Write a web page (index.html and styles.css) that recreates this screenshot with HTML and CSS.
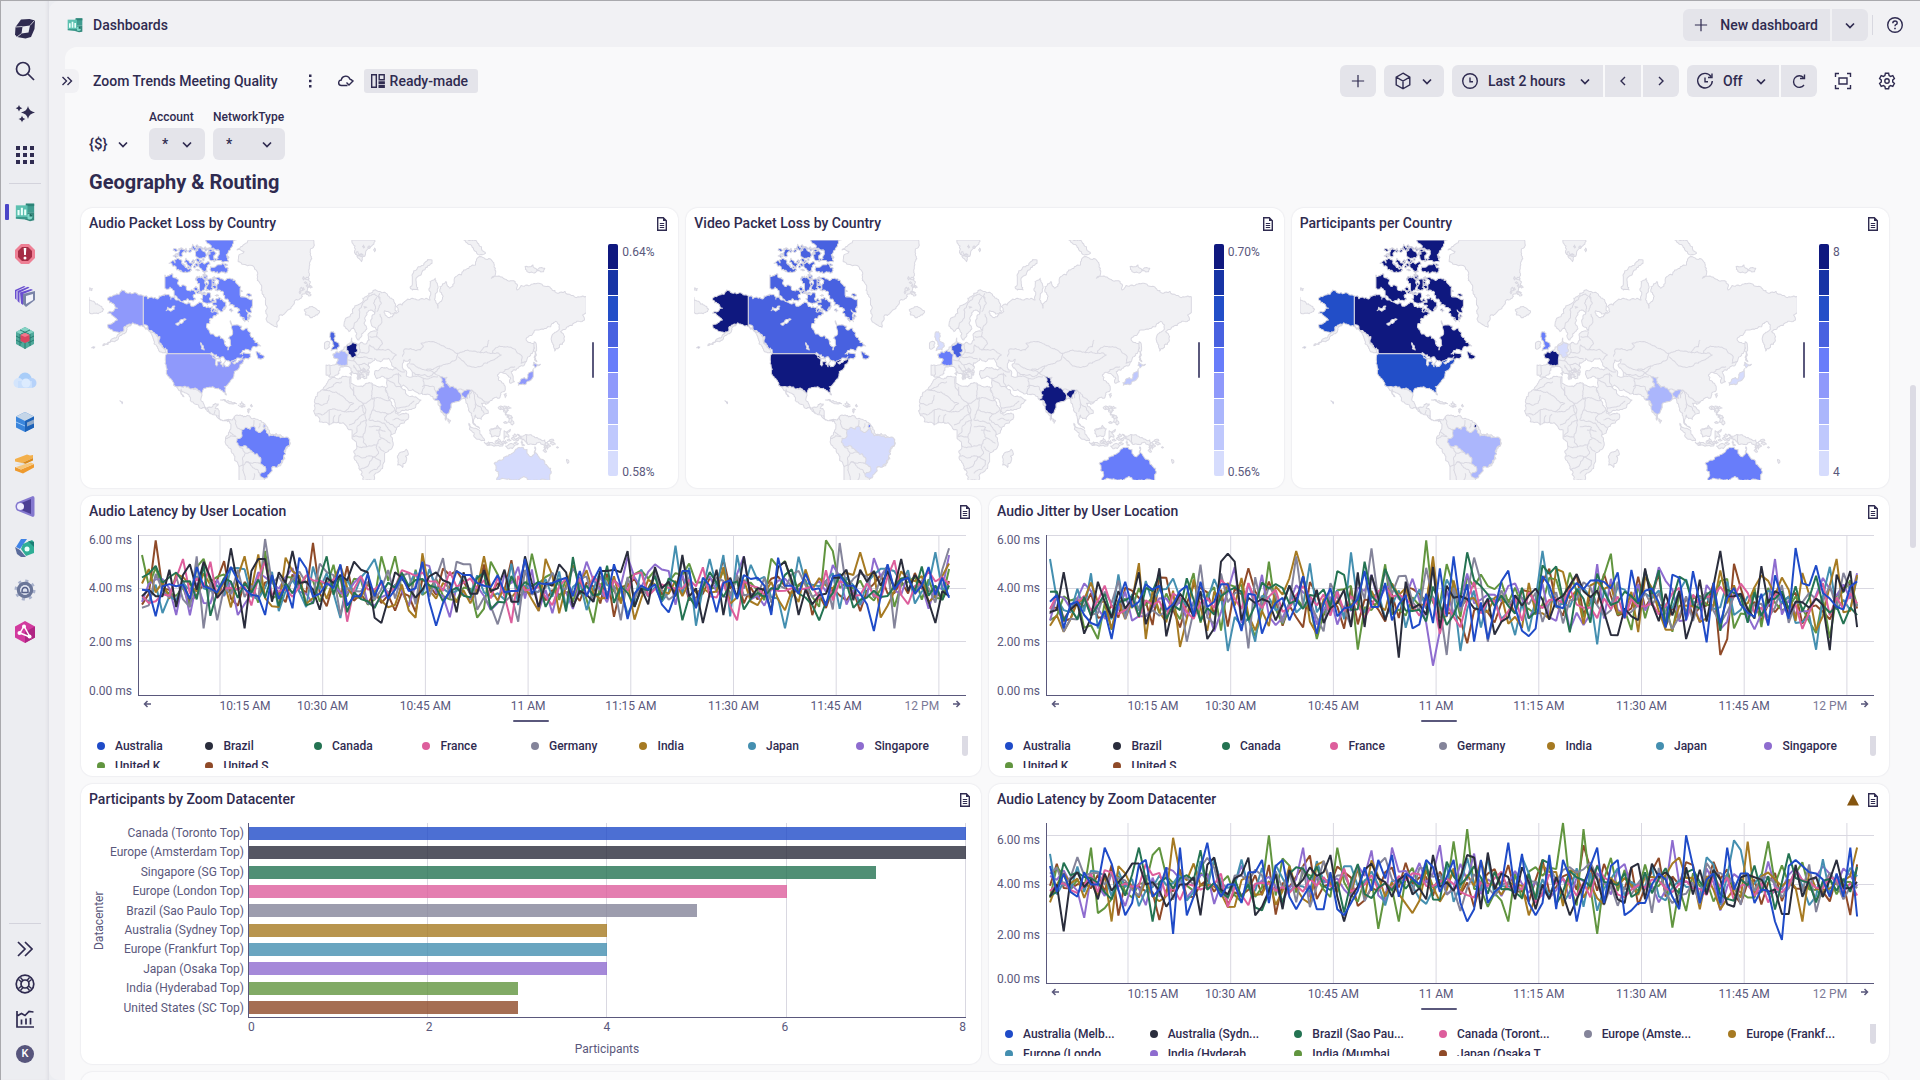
FILE: index.html
```html
<!DOCTYPE html>
<html lang="en">
<head>
<meta charset="utf-8">
<title>Zoom Trends Meeting Quality - Dashboards</title>
<meta name="viewport" content="width=device-width, initial-scale=1">
<link rel="stylesheet" href="styles.css">
</head>
<body>
<svg class="defs" aria-hidden="true">
  <symbol id="chev" viewBox="0 0 16 16"><path d="M4 6.500l4 4 4-4" class="ln2"/></symbol>
  <symbol id="plus" viewBox="0 0 16 16"><path d="M8 1v14M1 8h14" class="ln"/></symbol>
  <symbol id="doc" viewBox="0 0 16 16"><path d="M3.700 1.700h5.600l3 3v9.600H3.700z" class="ln"/><path d="M9 1.500v3.500h3.500z" fill="currentColor"/><path d="M5.800 7.500h4.400M5.800 9.500h4.400M5.800 11.500h4.400" class="ln thin"/></symbol>
  <symbol id="dash" viewBox="0 0 24 24">
    <path d="M13 2h10v11H13z" fill="#3f9c8f"/><path d="M13 2h10v3H13z" fill="#2d8478"/>
    <path d="M12 13h11v9l-5 1-6-2z" fill="#35897d"/><circle cx="17.500" cy="17.500" r="3.500" fill="#7fd8c8"/><path d="M17.500 17.500V14a3.500 3.500 0 0 1 3.500 3.500z" fill="#1f6a60"/>
    <path d="M1 4h14v14H1z" fill="#5cc0b0"/><path d="M1 18h14v2l-3 1-11-1z" fill="#3b988b"/>
    <path d="M3 9.500h2.500V16H3zM7 7h2.500v9H7zM11 9h2.500v7H11z" fill="#e9fffa"/>
  </symbol>
</svg>

<nav class="rail" aria-label="Main">
  <a class="rail-item" href="#" aria-label="Home"><svg width="20" height="20" viewBox="0 0 20 20"><path d="M6 .5L14.500 0 20 1.500 19.500 10l-3.500 8-5.500 1.500L2 18 0 15.500 .5 8z" fill="#2f2b50"/><path d="M7.500 7.500l7.500-1-1.500 7-7 1z" fill="#ecedf1"/><path d="M.5 8l7-.5M15 6.500l4.500-5M6.500 14.500L2 18" stroke="#ecedf1" stroke-width=".8"/></svg></a>
  <a class="rail-item" href="#" aria-label="Search"><svg width="20" height="20" viewBox="0 0 20 20"><circle cx="8" cy="8" r="6.500" class="ln2"/><path d="M13 13l6 6" class="ln2"/></svg></a>
  <a class="rail-item" href="#" aria-label="Assistant"><svg width="20" height="20" viewBox="0 0 20 20" fill="currentColor"><path d="M13 3q.8 5.200 7 6.500-6.200 1.300-7 6.500-.8-5.200-7-6.500Q12.200 8.200 13 3zM4 2q.5 2.800 3.300 3.300Q4.500 5.800 4 8.600 3.500 5.800.7 5.300 3.500 4.800 4 2zM7 12.500q.5 3 3.500 3.500-3 .5-3.500 3.500-.5-3-3.500-3.500 3-.5 3.500-3.500z"/></svg></a>
  <a class="rail-item" href="#" aria-label="Apps"><svg width="18" height="18" viewBox="0 0 18 18" fill="currentColor"><path d="M0 0h4v4H0zM7 0h4v4H7zM14 0h4v4h-4zM0 7h4v4H0zM7 7h4v4H7zM14 7h4v4h-4zM0 14h4v4H0zM7 14h4v4H7zM14 14h4v4h-4z"/></svg></a>
  <hr class="rail-rule">
  <a class="rail-item active" href="#" aria-label="Dashboards"><svg width="20" height="20"><use href="#dash"/></svg></a>
  <a class="rail-item" href="#" aria-label="Problems"><svg width="20" height="20" viewBox="0 0 20 20"><path d="M6 0h8l6 6v8l-6 6H6l-6-6V6z" fill="#ee8095"/><path d="M7 3h6l4 4v6l-4 4H7l-4-4V7z" fill="#a52c45"/><path d="M8.700 4h2.600l-.4 7H9.100z" fill="#fff"/><circle cx="10" cy="14" r="1.500" fill="#fff"/></svg></a>
  <a class="rail-item" href="#" aria-label="Services"><svg width="20" height="21" viewBox="0 0 20 21"><path d="M8 8l12-3v9l-9 7-3-3z" fill="#7a84a8"/><path d="M11 10l7-2v6l-7 4z" fill="#f2f3fb"/><path d="M5 6.500L16 3l2 1L8 8v11l-2-1.500zM2.500 5L13 .8l1.500 1L4.500 6.500v10.500L2.500 15zM0 4l9-4 1.500.7L1.500 5v9L0 12.500z" fill="#6a4fd0"/></svg></a>
  <a class="rail-item" href="#" aria-label="Kubernetes"><svg width="20" height="22" viewBox="0 0 20 22"><path d="M10 0l9 5v12l-9 5-9-5V5z" fill="#4fa99b"/><path d="M10 0l9 5-9 4-9-4z" fill="#86d3c5"/><path d="M1 9l6 3M1 13l6 3M19 9l-6 3M19 13l-6 3M5 3l9 4M15 3L6 7M5 7v12M15 7v12M10 16v6" stroke="#24776c" stroke-width=".9"/><path d="M10 6l4.500 2v6L10 16l-4.500-2V8z" fill="#d9455f"/><path d="M10 6l4.500 2-4.500 2-4.500-2z" fill="#f0788c"/></svg></a>
  <a class="rail-item" href="#" aria-label="Clouds"><svg width="24" height="17" viewBox="0 0 24 17"><circle cx="12" cy="7" r="6.500" fill="#a9cdf8"/><circle cx="5.500" cy="11" r="5" fill="#d4e5fc"/><circle cx="18.500" cy="11" r="5" fill="#b6d2fa"/><path d="M5 9h14v7H5z" fill="#c9dffc"/><circle cx="13" cy="11" r="4.500" fill="#dcebfe"/></svg></a>
  <a class="rail-item" href="#" aria-label="Infrastructure"><svg width="20" height="20" viewBox="0 0 20 20"><path d="M10 0l9 4.500v11L10 20l-9-4.500v-11z" fill="#3b86dc"/><path d="M10 0l9 4.500L10 9 1 4.500z" fill="#c5d6e8"/><path d="M10 9l9-4.500v11L10 20z" fill="#1d62b8"/><path d="M12 10.500l7-3v4l-7 3z" fill="#8fa9c9"/><path d="M1 10l9 4" stroke="#9cc9fa"/></svg></a>
  <a class="rail-item" href="#" aria-label="Workflows"><svg width="20" height="20" viewBox="0 0 20 20"><path d="M0 5L12 .500l3 1L18 1v3L7 9 0 7.500z" fill="#f3b04c"/><path d="M7 9L18 4v2.500L7 11.500z" fill="#d98a1e"/><path d="M0 10l6 2 5-2-3-1z" fill="#e4e2de"/><path d="M0 13l6 2.500L19 10v3.500L8 19.500 0 16.500z" fill="#ee9a2e"/><path d="M6 15.500L19 10l-3-1.500L1 13z" fill="#f7c679"/></svg></a>
  <a class="rail-item" href="#" aria-label="Synthetic"><svg width="20" height="21" viewBox="0 0 20 21"><path d="M18 0q1.500.3 1.500 2v17q0 1.700-1.500 2L2 14.500q-3-4 0-8z" fill="#8478cf"/><path d="M16 3v15L5 13.500q-1.500-3 0-6z" fill="#4c3f95"/><circle cx="5.500" cy="10.500" r="3.500" fill="#f1efff"/></svg></a>
  <a class="rail-item" href="#" aria-label="Security"><svg width="20" height="20" viewBox="0 0 20 20"><path d="M6 1h6L5 11 1 9z" fill="#3f83e6"/><path d="M0 9l5 3 6 7H6L2 16z" fill="#5a6b9b"/><path d="M8 6l9-4 2 2v11l-8 3-5-7z" fill="#2fae96"/><path d="M13 3l6 1v5z" fill="#1b7d75"/><circle cx="12" cy="11" r="2.500" fill="#e9fffb"/></svg></a>
  <a class="rail-item" href="#" aria-label="Settings"><svg width="22" height="22" viewBox="0 0 22 22"><circle cx="11" cy="11" r="9" fill="none" stroke="#a9b2cc" stroke-width="3" stroke-dasharray="3 4.070"/><circle cx="11" cy="11" r="6.500" fill="none" stroke="#6a7699" stroke-width="3.500"/><circle cx="11" cy="11" r="4.800" fill="#dfe4f1"/><path d="M8 13.500v-1q0-4 3-4t3 4v1z" fill="none" stroke="#56618a" stroke-width="1.500"/></svg></a>
  <a class="rail-item" href="#" aria-label="Topology"><svg width="20" height="22" viewBox="0 0 20 22"><path d="M10 0l10 5.500v11L10 22 0 16.500v-11z" fill="#d23a9e"/><path d="M10 11l10-5.500v11L10 22z" fill="#b02584"/><path d="M9 5L5 12l10 4z" fill="none" stroke="#fff" stroke-width="1.500"/><circle cx="9" cy="5.500" r="2" fill="#fff"/><circle cx="4.500" cy="12" r="2" fill="#fff"/><circle cx="14.500" cy="15.500" r="2" fill="#fff"/></svg></a>
  <div class="rail-foot">
    <hr class="rail-rule">
    <button class="foot-item" aria-label="Expand"><svg width="16" height="16" viewBox="0 0 16 16"><path d="M1 1l7 7-7 7M8 1l7 7-7 7" class="ln2"/></svg></button>
    <button class="foot-item" aria-label="Support"><svg width="20" height="20" viewBox="0 0 20 20"><circle cx="10" cy="10" r="8.800" class="ln2"/><circle cx="10" cy="10" r="4" class="ln2"/><path d="M3.500 5.500l3 2.500M5.500 3.500L8 6.500M16.500 5.500l-3 2.500M14.500 3.500L12 6.500M3.500 14.500l3-2.500M5.500 16.500L8 13.500M16.500 14.500l-3-2.500M14.500 16.500L12 13.500" class="ln"/></svg></button>
    <button class="foot-item" aria-label="Usage"><svg width="18" height="18" viewBox="0 0 18 18"><path d="M1 1v16h17M5.500 14.500v-5M10 14.500V8.500M14.500 14.500V8M1 6l4.500-2.500L9 5.500l4-4 4.500.5" class="ln2"/></svg></button>
    <button class="foot-item" aria-label="Account K"><span class="avatar">K</span></button>
  </div>
</nav>

<div class="shell">
  <header class="topbar">
    <svg width="16" height="16"><use href="#dash"/></svg>
    <a class="app-name" href="#">Dashboards</a>
    <div class="split push">
      <button class="btn new"><svg width="14" height="14"><use href="#plus"/></svg>New dashboard</button>
      <button class="btn sq" aria-label="More"><svg width="16" height="16"><use href="#chev"/></svg></button>
    </div>
    <span class="sep"></span>
    <button class="ghost" aria-label="Help"><svg width="18" height="18" viewBox="0 0 18 18"><circle cx="9" cy="9" r="7.300" class="ln"/><path d="M6.800 7.200q0-2.200 2.200-2.200t2.200 2q0 1.200-1.300 1.700-.9.400-.9 1.500" class="ln"/><path d="M8.200 11.700h1.600v1.500H8.200z" fill="currentColor"/></svg></button>
  </header>

  <main class="page">
    <div class="toolbar">
      <button class="tab" aria-label="Open panel"><svg width="12" height="12" viewBox="0 0 12 12"><path d="M1.500 2l4 4-4 4M6.500 2l4 4-4 4" class="ln"/></svg></button>
      <h1 class="doc-title">Zoom Trends Meeting Quality</h1>
      <button class="mini kebab" aria-label="Menu"><svg width="16" height="16" viewBox="0 0 16 16" fill="currentColor"><path d="M7 1.500h2.500V4H7zM7 6.800h2.500v2.500H7zM7 12h2.500v2.500H7z"/></svg></button>
      <svg class="cloud" width="16" height="16" viewBox="0 0 16 16"><path d="M9.500 12.500h-6A2.700 2.700 0 0 1 3.300 7 4.500 4.500 0 0 1 12 6.200q2 .3 2.500 1.800M8.500 9.500l2.500 2.500 4.500-4.500" class="ln"/></svg>
      <span class="chip"><svg width="16" height="16" viewBox="0 0 16 16"><path d="M1.700 1.700h4.600v12.600H1.700zM9.200 1.700h5v5h-5zM9.200 9h5v1.500h-5zM9.200 12.800h5v1.500h-5z" class="ln"/></svg>Ready-made</span>
      <button class="btn sq push" aria-label="Add"><svg width="14" height="14"><use href="#plus"/></svg></button>
      <button class="btn cube" aria-label="Segments"><svg width="18" height="18" viewBox="0 0 18 18"><path d="M9 1.200l6.800 3.900v7.800L9 16.800l-6.800-3.900V5.100zM2.200 5.200L9 9l6.800-3.800M9 9v7.700" class="ln"/></svg><svg width="16" height="16"><use href="#chev"/></svg></button>
      <div class="split">
        <button class="btn time"><svg width="18" height="18" viewBox="0 0 18 18"><circle cx="9" cy="9" r="7.300" class="ln"/><path d="M9 5.500v4.200h3" class="ln"/></svg><span class="grow">Last 2 hours</span><svg width="16" height="16"><use href="#chev"/></svg></button>
        <button class="btn sq" aria-label="Back"><svg width="16" height="16" viewBox="0 0 16 16"><path d="M10 4L6 8l4 4" class="ln"/></svg></button>
        <button class="btn sq" aria-label="Forward"><svg width="16" height="16" viewBox="0 0 16 16"><path d="M6 4l4 4-4 4" class="ln"/></svg></button>
      </div>
      <div class="split">
        <button class="btn off"><svg width="18" height="18" viewBox="0 0 18 18"><path d="M15 4.500A7.300 7.300 0 1 0 16.300 9M16 1.500v4h-4" class="ln"/><path d="M9 5.500v4.200h3" class="ln"/></svg><span class="grow">Off</span><svg width="16" height="16"><use href="#chev"/></svg></button>
        <button class="btn sq" aria-label="Refresh"><svg width="16" height="16" viewBox="0 0 16 16"><path d="M12.500 4.500A5.800 5.800 0 1 0 13 12M13.500 1.500V5.500H9" class="ln"/></svg></button>
      </div>
      <button class="ghost" aria-label="Full screen"><svg width="18" height="18" viewBox="0 0 18 18"><path d="M1.500 5V1.500H5M13 1.500h3.500V5M16.500 13v3.500H13M5 16.500H1.500V13M5 6h8v6H5z" class="ln"/></svg></button>
      <button class="ghost" aria-label="Settings"><svg width="18" height="18" viewBox="0 0 18 18"><path d="M7.400 1.300h3.200l.5 2.200 1.500.9 2.200-.7 1.600 2.800-1.700 1.500v2l1.700 1.500-1.600 2.800-2.200-.7-1.500.9-.5 2.200H7.400l-.5-2.200-1.500-.9-2.200.7-1.600-2.800L3.300 10V8L1.600 6.500l1.600-2.800 2.200.7 1.500-.9z" class="ln"/><circle cx="9" cy="9" r="2.200" class="ln"/></svg></button>
    </div>

    <div class="filters">
      <button class="vars" aria-label="Variables"><span>{$}</span><svg width="16" height="16"><use href="#chev"/></svg></button>
      <div class="field"><label for="account">Account</label><span class="pick"><select id="account"><option>*</option></select><svg width="16" height="16"><use href="#chev"/></svg></span></div>
      <div class="field wide"><label for="network">NetworkType</label><span class="pick"><select id="network"><option>*</option></select><svg width="16" height="16"><use href="#chev"/></svg></span></div>
    </div>

    <h2 class="section">Geography &amp; Routing</h2>

    <div class="tiles">
      <section class="card third">
        <div class="card-head"><h3>Audio Packet Loss by Country</h3><svg width="16" height="16"><use href="#doc"/></svg></div>
        <div class="geo"><svg class="map loss-audio" viewBox="0 0 497 240" preserveAspectRatio="xMidYMid slice" role="img" aria-label="World map"></svg><i class="grip-v"></i><div class="ramp"></div><div class="ramp-text"><span>0.64%</span><span>0.58%</span></div></div>
      </section>
      <section class="card third">
        <div class="card-head"><h3>Video Packet Loss by Country</h3><svg width="16" height="16"><use href="#doc"/></svg></div>
        <div class="geo"><svg class="map loss-video" viewBox="0 0 497 240" preserveAspectRatio="xMidYMid slice" role="img" aria-label="World map"></svg><i class="grip-v"></i><div class="ramp"></div><div class="ramp-text"><span>0.70%</span><span>0.56%</span></div></div>
      </section>
      <section class="card third">
        <div class="card-head"><h3>Participants per Country</h3><svg width="16" height="16"><use href="#doc"/></svg></div>
        <div class="geo"><svg class="map people" viewBox="0 0 497 240" preserveAspectRatio="xMidYMid slice" role="img" aria-label="World map"></svg><i class="grip-v"></i><div class="ramp"></div><div class="ramp-text"><span>8</span><span>4</span></div></div>
      </section>

      <section class="card half">
        <div class="card-head"><h3>Audio Latency by User Location</h3><svg width="16" height="16"><use href="#doc"/></svg></div>
        <div class="chart" data-chart="latency"></div>
      </section>
      <section class="card half">
        <div class="card-head"><h3>Audio Jitter by User Location</h3><svg width="16" height="16"><use href="#doc"/></svg></div>
        <div class="chart" data-chart="jitter"></div>
      </section>

      <section class="card half">
        <div class="card-head"><h3>Participants by Zoom Datacenter</h3><svg width="16" height="16"><use href="#doc"/></svg></div>
        <div class="bars">
          <div class="bars-title">Datacenter</div>
          <ul class="cats"><li>Canada (Toronto Top)</li><li>Europe (Amsterdam Top)</li><li>Singapore (SG Top)</li><li>Europe (London Top)</li><li>Brazil (Sao Paulo Top)</li><li>Australia (Sydney Top)</li><li>Europe (Frankfurt Top)</li><li>Japan (Osaka Top)</li><li>India (Hyderabad Top)</li><li>United States (SC Top)</li></ul>
          <div class="bars-plot"></div>
          <div class="bars-ticks"><span>0</span><span>2</span><span>4</span><span>6</span><span>8</span></div>
          <div class="bars-unit">Participants</div>
        </div>
      </section>
      <section class="card half">
        <div class="card-head"><h3>Audio Latency by Zoom Datacenter</h3><svg class="warn" width="16" height="16" viewBox="0 0 16 16"><path d="M8 2l6 11.500H2z" fill="#85550f"/></svg><svg width="16" height="16"><use href="#doc"/></svg></div>
        <div class="chart" data-chart="center"></div>
      </section>
      <div class="card next"></div>
    </div>
    <i class="page-thumb"></i>
  </main>
</div>
<script src="app.js"></script>
</body>
</html>
```
FILE: styles.css
```css
* { box-sizing: border-box; }
:root {
  --ink: #2f2b50;
  --axis: #5a587c;
  --btn: #e4e4ea;
  --gutter: #f1f1f4;
  --s1: #1f4bc8; --s2: #2a2d3c; --s3: #247352; --s4: #dd5e9c; --s5: #84849a;
  --s6: #a67a22; --s7: #448fb0; --s8: #8e6ccf; --s9: #61953f; --s10: #8f4a28;
}
body {
  margin: 0;
  display: flex;
  height: 100vh;
  overflow: hidden;
  font: 500 14px/20px Roboto, "Noto Sans", sans-serif;
  color: var(--ink);
  background: #ecedf1;
  border-top: 1px solid #a9a9ad;
  border-left: 1px solid #a9a9ad;
}
h1, h2, h3 { margin: 0; font-size: inherit; font-weight: 500; }
ul { margin: 0; padding: 0; list-style: none; }
button, select { font: inherit; color: inherit; border: 0; margin: 0; padding: 0; background: none; }
a { color: inherit; text-decoration: none; }
svg { display: block; flex: none; }
.defs { position: absolute; width: 0; height: 0; }
.ln { fill: none; stroke: currentColor; stroke-width: 1.4; }
.ln2 { fill: none; stroke: currentColor; stroke-width: 1.7; }
.thin { stroke-width: 1; }
.push { margin-left: auto; }

/* left rail */
.rail { width: 48px; flex: none; display: flex; flex-direction: column; padding-top: 7px; box-shadow: inset -3px 0 4px -3px #cfd0d8; }
.rail-item { height: 42px; flex: none; display: grid; place-items: center; position: relative; }
.rail-rule { flex: none; width: 32px; height: 1px; margin: 7px auto; border: 0; background: #d3d3dc; }
.rail-item.active::before { content: ""; position: absolute; left: 4px; top: 13px; width: 4px; height: 16px; border-radius: 1px; background: #4b46c8; }
.rail-foot { margin-top: auto; padding-bottom: 9px; }
.foot-item { display: grid; place-items: center; width: 100%; height: 35px; }
.avatar { width: 18px; height: 18px; border-radius: 50%; background: #57557c; color: #fff; font-size: 11px; line-height: 18px; }

/* shell */
.shell { flex: 1; min-width: 0; display: flex; flex-direction: column; background: var(--gutter); border-radius: 10px 0 0 10px; }
.topbar { height: 46px; flex: none; display: flex; align-items: center; padding: 2px 7px 0 18px; }
.app-name { margin-left: 10px; }
.split { display: flex; gap: 2px; }
.btn { height: 32px; display: flex; align-items: center; justify-content: center; background: var(--btn); border-radius: 6px; }
.split .btn { border-radius: 0; }
.split .btn:first-child { border-radius: 6px 0 0 6px; }
.split .btn:last-child { border-radius: 0 6px 6px 0; }
.sq { width: 36px; }
.new { padding: 0 12px 0 11px; gap: 12px; }
.sep { width: 1px; height: 20px; margin: 0 4px; background: #d8d8e0; }
.ghost { width: 36px; height: 32px; display: grid; place-items: center; }

.page { flex: 1; min-height: 0; position: relative; background: #f9f9fa; margin-left: 16px; border-radius: 12px 0 0 0; padding: 18px 15px 0 0; }
.toolbar { display: flex; align-items: center; gap: 8px; }
.tab { width: 14px; height: 24px; display: flex; align-items: center; background: var(--gutter); border-radius: 0 6px 6px 0; }
.tab svg { margin-left: -4px; }
.doc-title { margin-left: 6px; }
.mini { margin-left: 16px; }
.cloud { margin-left: 12px; }
.chip { display: flex; align-items: center; gap: 4px; height: 24px; min-width: 114px; padding: 0 6px; background: var(--btn); border-radius: 3px; margin-left: 2px; }
.cube { width: 60px; gap: 7px; padding-left: 1px; }
.time { width: 151px; padding: 0 10px 0 9px; gap: 9px; }
.off { width: 92px; padding: 0 10px 0 9px; gap: 9px; }
.grow { flex: 1; text-align: left; }

.filters { display: flex; align-items: flex-end; gap: 8px; padding: 12px 0 0 24px; }
.vars { display: flex; align-items: center; gap: 7px; height: 32px; width: 52px; font-size: 15px; }
.field { width: 56px; font-size: 12px; }
.field.wide { width: 72px; }
.field label { display: block; line-height: 16px; margin-bottom: 3px; white-space: nowrap; }
.pick { display: grid; align-items: center; background: var(--btn); border-radius: 6px; }
.pick select { grid-area: 1 / 1; width: 100%; height: 32px; padding-left: 13px; appearance: none; font-size: 14px; }
.pick svg { grid-area: 1 / 1; justify-self: end; margin-right: 10px; pointer-events: none; }
.section { padding-left: 24px; font-size: 20px; font-weight: 700; line-height: 44px; }

/* tiles */
.tiles { display: grid; grid-template-columns: repeat(6, 1fr); grid-auto-rows: 280px; gap: 8px; margin: 4px 16px 0; }
.card { min-width: 0; overflow: hidden; display: flex; flex-direction: column; background: #fff; border-radius: 12px; padding: 0 8px 8px; box-shadow: 0 0 1px 1px #efeff2; }
.third { grid-column: span 2; }
.half { grid-column: span 3; }
.next { grid-column: 1 / -1; background: #fbfbfc; }
.card-head { display: flex; align-items: center; gap: 4px; height: 32px; flex: none; }
.card-head h3 { flex: 1; line-height: 18px; padding-bottom: 2px; }

.geo { display: flex; flex: 1; min-height: 0; }
.map { flex: 1; min-width: 0; height: 240px; }
.map path { fill: #f1f1f4; stroke: #d9d8e1; stroke-width: 1; stroke-linejoin: round; }
.map .water { fill: #fff; }
.map .line { fill: none; }
.map .ca { fill: var(--ca); } .map .us { fill: var(--us); } .map .br { fill: var(--br); }
.map .gb { fill: var(--gb); } .map .de { fill: var(--de); } .map .fr { fill: var(--fr); }
.map .in { fill: var(--in); } .map .jp { fill: var(--jp); } .map .au { fill: var(--au); }
.loss-audio { --ca: #687dfa; --us: #8f99fb; --br: #687dfa; --gb: #4861e0; --de: #0f187f; --fr: #abb6fc; --in: #8f99fb; --jp: #8f99fb; --au: #d6dcfd; }
.loss-video { --ca: #4861e0; --us: #0f187f; --br: #d6dcfd; --gb: #d6dcfd; --de: #4861e0; --fr: #687dfa; --in: #0f187f; --jp: #bfc8fd; --au: #687dfa; }
.people { --ca: #0f187f; --us: #224ec8; --br: #abb6fc; --gb: #687dfa; --de: #d6dcfd; --fr: #0f187f; --in: #abb6fc; --jp: #d6dcfd; --au: #687dfa; }
.grip-v { flex: none; width: 2px; height: 36px; margin: 102px 14px 0 6px; background: var(--axis); border-radius: 1px; }
.ramp { flex: none; width: 10px; height: 232px; margin-top: 4px; display: flex; flex-direction: column; gap: 1px; border-radius: 2px; overflow: hidden; }
.ramp i { flex: 1; }
.ramp-text { flex: none; width: 52px; height: 240px; padding: 4px 0 0 4px; display: flex; flex-direction: column; justify-content: space-between; font-size: 12px; line-height: 16px; font-weight: 400; color: var(--axis); }

.chart { display: grid; grid-template-columns: 50px 1fr; padding-right: 7px; }
.chart > svg { width: 100%; height: 200px; overflow: visible; }
.chart text { font-size: 12px; font-weight: 400; fill: var(--axis); }
.grid-line { stroke: #d9d8e1; stroke-width: 1; }
.axis-line { stroke: var(--axis); stroke-width: 1; }
.arrow { fill: none; stroke: var(--axis); stroke-width: 1.5; }
.series { fill: none; stroke-width: 2; stroke-linejoin: bevel; vector-effect: non-scaling-stroke; }
.legend-row { grid-column: 1 / -1; display: flex; margin: 8px -2px 0 0; height: 32px; justify-content: space-between; overflow: hidden; }
.legend { flex: none; width: calc(100% - 11px); display: grid; grid-auto-rows: 20px; font-size: 12px; line-height: 20px; }
.legend.c8 { grid-template-columns: repeat(8, 1fr); }
.legend.c6 { grid-template-columns: repeat(6, 1fr); }
.legend li { display: flex; align-items: center; gap: 10px; padding-left: 8px; white-space: nowrap; }
.legend i { width: 8px; height: 8px; border-radius: 50%; }
.legend-thumb { width: 6px; height: 23px; margin-top: -3px; border-radius: 3px; background: #dcdbe4; }
.grip-h { fill: var(--axis); }

.bars { flex: 1; display: grid; grid-template-columns: 17px 138px 1fr; grid-template-rows: 195px 18px 1fr; column-gap: 2px; padding: 7px 7px 0 0; font-size: 12px; font-weight: 400; color: var(--axis); }
.bars-title { writing-mode: vertical-rl; transform: rotate(180deg); text-align: center; }
.cats { display: grid; grid-auto-rows: 1fr; text-align: right; white-space: nowrap; line-height: 19px; padding: 1px 2px 0 0; }
.bars-plot { grid-column: 3; border-left: 1px solid var(--axis); border-bottom: 1px solid var(--axis); padding-top: 1px; display: grid; grid-auto-rows: 1fr; background: repeating-linear-gradient(90deg, transparent 0 calc(25% - 1px), #d9d8e1 calc(25% - 1px) 25%); }
.bars-plot i { align-self: center; height: 13px; opacity: .8; }
.bars-ticks { grid-column: 3; display: flex; justify-content: space-between; line-height: 18px; }
.bars-unit { grid-column: 3; text-align: center; line-height: 16px; padding-top: 5px; }

.page-thumb { position: absolute; right: 4px; top: 338px; width: 6px; height: 163px; border-radius: 3px; background: #dcdbe4; }
```
FILE: app.js
```js
const NS = 'http://www.w3.org/2000/svg';
const HUES = ['--s1', '--s2', '--s3', '--s4', '--s5', '--s6', '--s7', '--s8', '--s9', '--s10'];
const el = (name, attrs, parent, text) => {
  const n = document.createElementNS(NS, name);
  for (const k in attrs) n.setAttribute(k, attrs[k]);
  if (text) n.textContent = text;
  if (parent) parent.append(n);
  return n;
};
const rng = seed => () => {
  seed = seed + 0x6D2B79F5 | 0;
  let t = Math.imul(seed ^ seed >>> 15, 1 | seed);
  t = t + Math.imul(t ^ t >>> 7, 61 | t) ^ t;
  return ((t ^ t >>> 14) >>> 0) / 4294967296;
};

/* ---------- world map: survey units, 2.529 x 3 per map pixel ---------- */
const LAND = [
  ['', '730,425 718,400 722,385 740,370 752,345 765,325 780,310 795,300 812,308 838,325 848,345 850,365 835,372 820,362 825,378 840,380 856,365 850,350 865,345 870,335 890,325 905,330 925,325 935,330 932,300 935,275 948,265 955,290 948,320 955,355 965,330 960,290 975,275 985,295 1000,260 1020,240 1050,225 1065,200 1090,210 1100,235 1090,265 1120,265 1150,275 1155,300 1180,285 1210,280 1240,295 1260,310 1290,315 1330,320 1330,368 1320,375 1325,390 1300,398 1285,410 1265,425 1275,440 1262,465 1250,483 1245,460 1248,430 1262,405 1255,395 1240,410 1215,418 1195,430 1178,450 1200,460 1195,485 1178,515 1160,530 1140,545 1148,575 1138,580 1130,555 1118,548 1105,555 1120,580 1125,600 1110,625 1085,635 1065,640 1075,655 1082,670 1065,688 1050,675 1045,690 1060,715 1048,705 1040,670 1030,645 1020,625 1000,635 985,660 975,690 962,665 955,630 945,628 935,615 915,610 900,606 880,600 868,585 862,590 875,612 890,618 912,630 895,655 855,670 848,650 835,625 822,598 825,565 800,566 795,545 810,535 850,535 838,520 830,505 810,515 795,505 780,518 782,532 770,545 775,565 765,562 755,542 742,526 748,538 766,552 758,567 750,552 735,535 722,528 710,530 705,550 690,562 680,560 672,555 672,525 700,522 703,510 690,492 705,488 715,480 725,466 735,458 737,444 742,460 755,462 775,460 782,450 778,435 785,425 803,420 795,412 788,408 785,395 795,370 785,360 775,375 768,400 772,420 762,432 755,450 748,440 745,420 740,415'],
  ['', '685,565 735,560 735,580 765,590 775,580 820,590 822,602 838,640 855,675 880,672 875,690 850,715 835,735 840,770 820,790 820,815 810,840 795,865 790,872 768,872 755,835 743,800 750,770 738,745 738,720 725,710 715,698 680,705 655,695 643,670 645,640 660,600 672,585'],
  ['', '875,778 880,790 865,832 853,825 855,795'],
  ['', '475,150 640,150 635,200 630,250 625,300 600,330 575,360 555,375 548,412 530,400 520,370 515,320 505,280 495,240 470,225 450,215 452,195 465,185 447,180'],
  ['', '617,360 640,352 655,362 650,375 632,383 620,375'],
  ['', '885,290 890,260 905,230 940,210 940,220 915,245 900,275 905,300 890,300'],
  ['', '738,150 795,150 790,165 775,180 762,215 745,190'],
  ['', '1020,150 1045,150 1065,170 1075,190 1060,195 1045,175'],
  ['', '1175,230 1195,225 1205,240 1225,235 1222,245 1195,248 1180,245'],
  ['', '73,322 98,345 110,358 90,370 73,365'],
  ['', '73,294 82,296 80,302 73,300'],
  ['', '287,585 300,587 325,592 342,596 358,608 362,640 372,655 385,650 392,640 400,642 392,655 402,662 402,682 416,690 426,688 424,695 412,692 395,676 375,665 355,655 338,640 322,612 306,597 313,620 306,612 298,597'],
  ['', '424,692 440,680 455,675 490,685 520,705 530,730 560,738 580,748 582,760 565,790 560,820 540,830 525,850 515,872 452,872 452,830 435,790 420,765 418,745 428,725'],
  ['', '405,630 425,632 446,641 436,642 420,636'], ['', '450,645 468,648 458,652'],
  ['', '668,460 676,454 682,460 680,472 668,475'],
  ['', '1198,455 1202,490 1205,515 1199,510 1196,480'],
  ['', '1033,700 1050,715 1065,735 1073,752 1062,750 1046,728'], ['', '1072,757 1095,760 1120,764 1118,768 1090,765'],
  ['', '1085,720 1105,706 1115,716 1108,740 1090,740'], ['', '1122,722 1138,718 1128,728 1134,742 1126,738 1122,748'],
  ['', '1155,733 1170,738 1185,735 1225,750 1240,768 1222,765 1205,758 1200,764 1180,760 1172,748'],
  ['', '1122,648 1130,652 1128,668 1121,665'], ['', '1130,675 1142,682 1143,696 1132,696'],
  ['', '1122,613 1127,610 1125,623'], ['', '980,685 987,692 983,700'], ['', '1232,755 1246,748 1248,752'],
  ['', '1126,768 1145,762 1150,766 1132,776'], ['', '1280,808 1286,816 1283,820'], ['', '738,545 736,556 732,550'], ['', '768,350 775,352 770,355'],
  ['', '208,408 222,412 238,428 248,455 268,488 262,488 246,470 236,448 226,425'],
  ['', '180,404 168,415 155,436 130,453 108,467 128,450 148,432 160,416'],
  ['ca', '210,318 235,325 265,312 300,330 330,345 360,340 385,350 400,372 380,385 370,410 380,432 405,445 416,462 424,480 430,460 425,445 435,420 430,392 450,405 460,420 474,415 490,450 507,468 480,484 455,492 475,490 482,500 468,505 452,508 430,520 415,515 400,500 375,491 272,491 250,460 238,428 222,410 210,408'],
  ['ca', '495,485 505,488 516,500 500,505'],
  ['ca', '390,265 430,265 455,295 470,322 486,348 484,365 470,360 476,395 455,380 440,352 425,330 412,312 392,300'],
  ['ca', '265,255 285,252 298,268 300,285 340,305 342,328 300,328 288,302 265,295'],
  ['ca', '368,150 445,150 430,180 420,195 425,215 395,210 402,188 380,175'],
  ['ca', '380,230 425,235 422,248 382,245'], ['ca', '275,220 300,205 312,225 330,235 320,248 295,240'],
  ['ca', '335,163 358,180 368,200 350,205'], ['ca', '300,187 318,180 310,197 300,198'], ['ca', '350,262 362,266 364,300 352,300'], ['ca', '368,265 384,268 378,302 370,298'],
  ['ca', '355,215 375,215 372,245 360,242'], ['ca', '350,308 380,310 386,338 360,335'], ['ca', '385,340 410,330 418,350 400,360'], ['ca', '375,180 395,190 390,215 376,205'], ['ca', '318,205 340,212 335,225'],
  ['us', '120,330 155,300 185,310 210,318 210,408 192,403 175,402 158,425 140,425 120,405 145,390 130,375 120,370 145,355'],
  ['us', '79,473 88,471 85,475'],
  ['us', '151,632 158,636 157,641'],
  ['us', '270,491 375,491 400,505 415,515 418,530 430,522 455,510 465,508 462,520 440,545 432,570 415,590 420,615 410,602 400,595 380,592 362,598 357,610 342,594 325,591 287,585 275,560 268,530'],
  ['br', '447,745 460,738 458,718 480,718 488,708 495,722 520,715 528,738 550,738 578,745 580,765 568,780 565,805 558,820 535,832 530,850 518,865 505,852 520,835 505,820 500,795 485,785 470,768 450,765'],
  ['gb', '685,425 695,430 692,445 706,468 700,480 685,482 692,468 684,450'],
  ['de', '725,465 738,458 750,462 752,480 745,488 748,499 735,500 728,490 724,478'],
  ['fr', '690,492 705,488 713,480 728,492 726,508 726,525 712,528 697,522 703,510'],
  ['fr', '514,702 520,706 516,714'],
  ['in', '960,560 978,562 975,580 985,592 1010,608 1014,620 1018,606 1040,600 1030,625 1018,618 1000,635 985,660 974,690 962,660 957,632 945,628 955,615 950,605 970,590'],
  ['jp', '1197,517 1214,523 1200,534 1195,526'], ['jp', '1197,536 1196,560 1186,573 1158,586 1157,578 1180,567 1191,545'],
  ['au', '1097,820 1125,800 1150,780 1160,772 1180,778 1180,790 1192,800 1200,770 1210,800 1225,815 1240,835 1238,872 1192,872 1165,864 1130,868 1105,872 1100,840'],
  ['water', '868,510 885,508 878,522 888,542 890,560 875,558 872,540 865,522'],
  ['water', '272,352 290,348 280,364 268,362'], ['water', '292,402 318,388 310,398 298,406'], ['water', '355,458 362,468 364,480 357,476'],
  ['water', '385,500 410,500 418,512 412,530 405,510 396,528 394,508'], ['water', '436,518 462,500 458,506 440,522']
];
const BORDERS = [
  '740,415 752,390 755,360 775,330 795,312 810,325', '795,370 792,340 800,322', '800,365 812,340 808,310', '800,420 812,400 808,372',
  '782,440 800,440 802,425', '800,440 815,460 800,480 830,478 850,495 838,510', '755,462 758,485 778,488 782,465 800,480', '758,485 748,499 770,500 790,508', '725,510 742,512 748,499', '742,512 755,525 770,520 782,530', '755,525 758,545 772,542', '702,522 725,528', '682,525 680,560',
  '865,500 870,478 900,482 918,470 912,460 945,455 962,465 1005,490 1000,510 985,520 960,528 925,540 900,530 885,522', '1005,490 1030,480 1062,488 1092,490 1115,495 1085,515 1060,530 1030,528 1005,500', '1092,490 1110,468 1150,478 1168,500 1165,520 1178,515',
  '888,545 910,555 930,560 945,548 925,540', '960,528 945,548 962,560', '890,560 918,565 915,610', '918,565 940,562 955,560', '915,590 945,590 950,605', '850,535 862,545 872,545', '855,548 862,590', '825,565 850,552 862,560', '825,570 850,590 862,592', '848,655 880,648 895,632',
  '975,580 1000,598 1020,600', '1040,600 1055,620 1070,632 1085,635', '1040,600 1050,640 1062,650 1072,670', '1050,640 1045,665', '1040,605 1035,625', '1118,548 1135,535 1150,530', '1062,488 1080,470 1084,450',
  '735,560 732,580 742,615 765,640 795,622', '788,582 790,628 835,628', '742,590 742,615', '665,600 690,588 712,575', '665,600 742,640 718,665 680,660', '645,640 675,640 680,615', '680,660 662,675 645,672', '680,660 680,705', '695,675 692,700', '710,672 705,698', '718,665 740,665 765,645 770,670 742,700 730,705', '765,640 775,690 750,710', '795,628 790,660 780,690', '790,660 830,672 845,660', '830,672 820,690 850,712', '780,690 820,700 838,735', '750,712 740,740 765,740 775,770 750,768', '775,690 765,740', '780,710 810,712 808,740 835,760', '775,770 800,765 812,745', '800,765 805,790 790,800 745,798', '790,800 775,830 757,840', '790,800 810,812 800,838 780,850', '805,770 820,785', '840,690 870,690', '798,720 822,725',
  '440,680 445,705 458,720', '490,690 488,710', '505,700 502,715', '418,745 445,740', '428,725 445,740', '450,765 470,790 500,795', '452,830 470,815 505,820', '468,790 462,820 468,872', '470,815 500,840 505,852', '490,850 485,872', '372,655 380,668', '392,660 388,672', '402,680 398,676', '1180,735 1182,760', '1088,715 1112,714'
];
/* areas filled with small islands: class, x, y, width, height, how many */
const ISLETS = [
  ['ca', 285, 175, 80, 70, 26], ['ca', 345, 155, 80, 90, 34], ['ca', 340, 255, 60, 70, 22], ['ca', 385, 330, 60, 40, 16], ['ca', 440, 300, 45, 90, 12],
  ['', 1075, 735, 120, 30, 14], ['', 1110, 650, 35, 50, 9], ['', 750, 535, 35, 30, 12], ['', 605, 240, 30, 75, 10], ['', 1225, 755, 40, 30, 6], ['', 455, 640, 30, 25, 5], ['', 745, 160, 50, 40, 6]
];
const SX = 2.529, SY = 3;
const toPx = s => s.split(' ').map(p => { const [x, y] = p.split(',').map(Number); return [(x - 73) / SX, (y - 150) / SY]; });
const noise = (a, b) => { const v = Math.sin((a[0] + b[0]) * 12.9898 + (a[1] + b[1]) * 78.233) * 43758.5453; return (v - Math.floor(v)) - 0.5; };
function coast(a, b, k, out) {
  const dx = b[0] - a[0], dy = b[1] - a[1], len = Math.hypot(dx, dy);
  const straight = Math.abs(dx) < .1 || (Math.abs(dy) < .1 && len > 20);
  if (len < 1.8 || straight) { out.push(b); return; }
  const n = noise(a, b) * k * (len > 12 ? .5 : 1);
  const m = [(a[0] + b[0]) / 2 - dy * n, (a[1] + b[1]) / 2 + dx * n];
  coast(a, m, k, out); coast(m, b, k, out);
}
function trace(str, closed, k) {
  const p = toPx(str), out = [p[0]];
  for (let i = 1; i < p.length; i++) coast(p[i - 1], p[i], k, out);
  if (closed) coast(p[p.length - 1], p[0], k, out);
  return 'M' + out.map(q => q[0].toFixed(1) + ' ' + q[1].toFixed(1)).join('L') + (closed ? 'Z' : '');
}
document.querySelectorAll('.map').forEach(svg => {
  const draw = l => el('path', { class: l[0] || 'land', d: trace(l[1], true, l[0] === 'ca' ? .75 : .5) }, svg);
  LAND.filter(l => !l[0]).forEach(draw);
  BORDERS.forEach(b => el('path', { class: 'line', d: trace(b, false, .35) }, svg));
  const r = rng(5);
  ISLETS.forEach(([cls, x, y, w, h, n]) => {
    for (let i = 0; i < n; i++) {
      const cx = x + r() * w, cy = y + r() * h, s = 2 + r() * 5, t = 2 + r() * 5;
      draw([cls, [[cx - s, cy], [cx, cy - t], [cx + s, cy + t / 3], [cx, cy + t]].map(q => q.map(v => v.toFixed(1)).join()).join(' ')]);
    }
  });
  LAND.filter(l => l[0]).forEach(draw);
});
document.querySelectorAll('.ramp').forEach(r => ['#0f187f', '#1734a5', '#224ec8', '#4861e0', '#687dfa', '#8f99fb', '#abb6fc', '#bfc8fd', '#d6dcfd'].forEach(c => {
  const i = document.createElement('i'); i.style.background = c; r.append(i);
}));

/* ---------- time series ---------- */
const nums = s => s.split(' ').map(Number);
const CHARTS = {
  latency: {
    seed: 11, mean: 4.05, spread: .46, top: 6, cols: 8,
    ticks: [[6, 16], [4, 64], [2, 118], [0, 167]],
    names: ['Australia', 'Brazil', 'Canada', 'France', 'Germany', 'India', 'Japan', 'Singapore', 'United K...', 'United S...'],
    full: [
      nums('3.95 3.92 2.95 4.08 4.16 4.08 4.14 3.6 4.8 4.08 3.99 3.85 4.3 4.8 4.3 3.98 3.76 3.7 3 4.5 3.6 4.1 3.25 5.15 4.75 3.68 3.8 4.2 4 4.9 3.35 3.7 3.7 4.55 3.7 4.3 3.6 3.95 4.45 3.9 4 5 3.5 2.6 3.45 3.9 4.65 4.5 4.5 4.2 4.1 4.05 4.5 3.85 3.9 3.9 5.1 3.8 4.2 4.15 4.2 4.3 4.4 3.7 4.65 3.7 4.3 4.8 3.6 4.9 4.1 2.85 3.8 4.1 3.95 4.15 3.4 3.1 3.8 4.65 4.65 3.25 4.4 4.1 3.1 4.2 4.3 3.6 4.5 4.35 4.4 4.1 3 5.15 4.1 4.1 3.8 4.55 3.95 4 3.35 4.45 4.5 4.1 4.1 3.8 3.4 2.4 3.7 4.9 3.95 4.3 4.4 3.8 4.1 4.8 3.75 4.4 3.65'),
      nums('3.7 3.95 3.7 3.7 4.7 3.3 4.5 4.9 3.95 5 4.4 3.65 3.95 5.5 4.1 2.5 4.65 5.1 5.1 3.5 4.6 4.2 5.4 4.2 4.25 3.95 3.2 4.4 4.2 4.5 4.3 5 4.7 4.6 2.9 2.7 3.6 4.6 4.4 4 3.65 3.95 4.45 4.6 4.3 4.2 3.1 4.6 3.8 3.8 4.7 3.9 4 4.7 3.5 3.5 5.2 4.2 3.3 4.2 4.1 4.9 4.6 3.3 3.9 3.76 3.5 4.65 4.65 4.7 4.6 5.4 3.3 4 3.4 4.8 4 4.25 3.7 5.25 3.7 4 2.7 3.8 4.7 3 4.4 3.65 5.2 3.65 4 3.95 3.15 4.8 5 4.3 3 3.95 3.4 3.75 3.8 4.4 4.4 4.7 3.55 4.7 4.25 4.65 4.1 4.65 4 5.1 3.9 4.5 4.15 3.5 2.7 3.9 3.7')
    ],
    marks: { 2: { 27: 5.2, 30: 3.1, 79: 2.8, 99: 2.8 }, 3: { 6: 5.1, 10: 5, 18: 5, 30: 2.75, 54: 2.7, 87: 2.8, 110: 5.05 }, 4: { 8: 5.2, 9: 2.5, 11: 2.8, 18: 5.85, 46: 5, 47: 4.9, 48: 4.9, 52: 2.65, 55: 2.75, 70: 2.8, 102: 5.7, 110: 2.5, 118: 5.5 }, 5: { 15: 5.2, 40: 2.9, 50: 5.2, 59: 5.1, 105: 5.35 }, 6: { 34: 5.1, 78: 5.6, 81: 2.6, 83: 5.1, 85: 5.25, 87: 5.25, 94: 2.5, 116: 5.35 }, 7: { 5: 3, 14: 3, 65: 5, 88: 5.2 }, 8: { 0: 5.25, 18: 5.4, 35: 5.2, 37: 5.2, 49: 2.9, 66: 2.7, 100: 5.8, 101: 5.4 }, 9: { 2: 5.8, 25: 5.7, 54: 5.05 } }
  },
  jitter: {
    seed: 42, mean: 3.5, spread: .56, top: 6, cols: 8,
    ticks: [[6, 16], [4, 64], [2, 118], [0, 167]],
    names: ['Australia', 'Brazil', 'Canada', 'France', 'Germany', 'India', 'Japan', 'Singapore', 'United K...', 'United S...'],
    full: [
      nums('3.5 3.75 2.5 3.4 3.5 3 2.7 2.6 3.15 2.1 3.5 4.25 3.3 3.5 4.15 3.95 4.1 3.2 3.4 3.9 4.1 2.95 4.25 3.3 3.5 4.15 4.15 3.25 2.4 3.8 3.75 2.3 3 3.45 3.65 2.8 3.4 4.45 3.4 2.3 3.45 4 2.95 3.25 3.3 3.6 4.65 3.3 3.3 4.2 2.8 3.4 3.75 2.5 2.65 3.8 2.7 4.75 2.95 5.2 3.3 4.15 2'),
      nums('3.1 3.2 4.6 3.2 3.45 2.3 2.9 4.25 3.5 2.9 3.9 3.25 3.6 4.6 2.65 3.4 4.75 2.2 3.3 3.8 3.45 2.95 3.9 2.1 2.5 5 5.3 5 2.8 3.65 3.45 3.6 3.5 2.8 3.4 4.1 3.5 4.45 3.15 3.95 2.7 3.25 3.45 3.95 2.55 4.6 2.55 4.5 3.65 2.8 3.65 1.4 4.25 3.25 3.4 3 4.8 2.5 4.1 3.65 3.7 3.6 3.25')
    ],
    marks: { 1: { 93: 2.1, 98: 5.4 }, 2: { 46: 5, 61: 5.35, 62: 4.3 }, 3: { 57: 2.3 }, 4: { 20: 2, 29: 1.75, 36: 5.2, 47: 5.5, 58: 1.5, 64: 2 }, 5: { 14: 2.1, 19: 1.8, 36: 5.4, 56: 5.2, 115: 5.1 }, 6: { 0: 5.1, 26: 1.65, 30: 2, 44: 5.35, 60: 1.65, 72: 5.4, 80: 1.9, 112: 1.7 }, 7: { 27: 4.8, 55: 2.7, 56: 1.1, 57: 2.4, 106: 5.1 }, 8: { 7: 2.1, 32: 5, 39: 2.1, 45: 1.7, 49: 4.9, 55: 5.8, 82: 5.3 }, 9: { 29: 4.75, 56: 4.9, 98: 1.5 } }
  },
  center: {
    seed: 77, mean: 4, spread: .5, top: 6.5, cols: 6,
    ticks: [[6, 28], [4, 72], [2, 123], [0, 167]],
    names: ['Australia (Melb...', 'Australia (Sydn...', 'Brazil (Sao Pau...', 'Canada (Toront...', 'Europe (Amste...', 'Europe (Frankf...', 'Europe (Londo...', 'India (Hyderab...', 'India (Mumbai...', 'Japan (Osaka T...'],
    full: [
      nums('4.75 3.7 4.45 3.7 3.5 4.5 4 4 5.5 4.85 3.8 2.75 3.25 4.8 5 3.5 3.8 4.7 2 5.5 2.75 3.5 4.65 5.7 4.05 3.5 4 4 3.25 4.5 4.5 5 3.25 4.75 5 3.5 3 3.5 3.95 3 3 4.5 3 2.75 3.25 3.75 4.7 3.75 5 4.25 5.2 3.5 4.45 4.25 4 5 4.7 3.7 4.3 5 3.25 2.5 3 5 3.25 3.7 3.95 5.7 3.65 5.25 3.25 2.75 3.25 5.2 3 5 4.3 2.5 3.8 4.75 5.5 3.25 4.75 5 2.75 2.95 3.25 3.25 4 4.45 4.2 3.5 3 6 4.75 3.25 4.2 4.45 3.25 5.5 3.8 4.45 4.45 3.25 3.8 3.75 2.5 1.75 4.75 5 4.75 4.5 4.45 4.2 3.5 4.45 3.5 5.5 2.7'),
      nums('3.5 4 2.1 4.2 4.5 3.9 4.2 3.4 4.45 3.75 4.1 4.4 4.85 4.85 4 4.1 3.75 3.1 3.5 4 4 4.3 2.75 4.8 5.1 3.8 3.6 4.25 4.4 5.1 2.75 3.1 3.75 4.4 3 4.6 3.9 4.2 4.7 4.35 4.5 5.2 3.5 2.5 3.5 3.9 4.6 4.85 4.25 4.1 3.5 4.2 4.4 3.6 3.85 3.4 5.2 3.9 4.1 3.75 4.3 5.2 5.1 3 5.3 3.8 4.45 4.3 3.4 4.7 4.1 3 4 3.4 4.3 3.6 2.75 3.4 4 4.75 4.2 3.2 4.2 3.4 3.25 4.7 4.85 3.4 4.85 4.3 4.5 4.2 3.1 4.7 3.6 4.6 3.6 4.6 4.2 3.2 3.1 4.3 4.4 4.3 4.2 3.7 3.8 2.8 2.8 4.8 3.5 4.2 4.3 3.5 4.2 5 3.85 3.85 4.1')
    ],
    marks: { 2: { 13: 5.5, 15: 2.5, 22: 5.4 }, 5: { 9: 2.5, 18: 5.9, 70: 2.75, 102: 5.75, 110: 2.5, 118: 5.5 }, 6: { 0: 5.25, 100: 5.8, 101: 5.4 }, 7: { 5: 2.65, 37: 5.5, 50: 5.5, 57: 5.6, 91: 5.8 }, 8: { 6: 5.5, 15: 5.2, 16: 5.5, 32: 6, 42: 5.5, 48: 2.2, 51: 2.5, 59: 5.75, 61: 6.25, 67: 2.5, 75: 6.5, 78: 6.25, 80: 2, 91: 2.25, 105: 5.75 }, 9: { 78: 5.6 } }
  }
};
const W = 827, COUNT = 119, TOP = 7, BASE = 167;
const pct = x => (x / W * 100).toFixed(3) + '%';
function values(c, k) {
  const r = rng(c.seed * 100 + k), out = [];
  for (let i = 0; i < COUNT; i++) {
    const g = (r() + r() + r() - 1.5) * 2 * c.spread * (k === 3 ? .7 : k < 2 ? 1.3 : 1);
    const fixed = c.full[k] && c.full[k][i];
    const mark = c.marks[k] && c.marks[k][i];
    out.push(mark || fixed || c.mean + g);
  }
  return out;
}
document.querySelectorAll('.chart').forEach(box => {
  const c = CHARTS[box.dataset.chart];
  const y = v => BASE - v / c.top * (BASE - TOP);
  const left = el('svg', {}, box);
  c.ticks.forEach(t => el('text', { x: 43, y: t[1], 'text-anchor': 'end' }, left, t[0].toFixed(2) + ' ms'));
  const plot = el('svg', {}, box);
  c.ticks.forEach(t => el('line', { class: 'grid-line', x1: 0, x2: '100%', y1: Math.floor(y(t[0])) + .5, y2: Math.floor(y(t[0])) + .5 }, plot));
  ['10:15 AM', '10:30 AM', '10:45 AM', '11 AM', '11:15 AM', '11:30 AM', '11:45 AM', '12 PM'].forEach((label, i) => {
    const x = 81 + i * 102.7;
    el('line', { class: 'grid-line', x1: pct(x), x2: pct(x), y1: TOP, y2: BASE }, plot);
    const lx = i === 0 ? x + 25 : i === 7 ? x - 17 : x;
    el('text', { x: pct(lx), y: 182, 'text-anchor': 'middle', opacity: i === 7 ? .8 : 1 }, plot, label);
  });
  const lines = el('svg', { width: '100%', height: 200, viewBox: '0 0 ' + W + ' 200', preserveAspectRatio: 'none', overflow: 'visible' }, plot);
  for (let k = 9; k >= 0; k--) {
    const pts = values(c, k).map((v, i) => (3 + i * 6.84).toFixed(1) + ',' + y(v).toFixed(1)).join(' ');
    el('polyline', { class: 'series', points: pts, style: 'stroke:var(' + HUES[k] + ')' }, lines);
  }
  el('path', { class: 'arrow', d: 'M12 176H5.500M8.500 173l-3 3 3 3' }, plot);
  const right = el('svg', { x: pct(813), y: 168, width: 14, height: 16, overflow: 'visible' }, plot);
  el('path', { class: 'arrow', d: 'M1 8h6.500M4.500 5l3 3-3 3' }, right);
  el('line', { class: 'axis-line', x1: -.5, x2: -.5, y1: TOP, y2: BASE }, plot);
  el('line', { class: 'axis-line', x1: -1, x2: '100%', y1: BASE + .5, y2: BASE + .5 }, plot);
  el('rect', { class: 'grip-h', x: pct(374), y: 192, width: 36, height: 2, rx: 1 }, plot);
  const row = document.createElement('div');
  row.className = 'legend-row';
  row.innerHTML = '<ul class="legend c' + c.cols + '">' + c.names.map((n, i) => '<li><i style="background:var(' + HUES[i] + ')"></i>' + n + '</li>').join('') + '</ul><span class="legend-thumb"></span>';
  box.append(row);
});

/* ---------- bars ---------- */
[8, 8, 7, 6, 5, 4, 4, 4, 3, 3].forEach((v, i) => {
  const b = document.createElement('i');
  b.style.width = v / 8 * 100 + '%';
  b.style.background = 'var(' + HUES[i] + ')';
  document.querySelector('.bars-plot').append(b);
});
```
